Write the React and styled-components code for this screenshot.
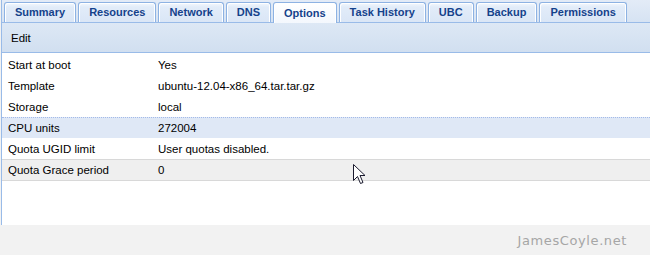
import styled, { createGlobalStyle } from "styled-components";

const tabs = [
  "Summary",
  "Resources",
  "Network",
  "DNS",
  "Options",
  "Task History",
  "UBC",
  "Backup",
  "Permissions",
];

const rows = [
  { name: "Start at boot", value: "Yes" },
  { name: "Template", value: "ubuntu-12.04-x86_64.tar.tar.gz" },
  { name: "Storage", value: "local" },
  { name: "CPU units", value: "272004", state: "selected" },
  { name: "Quota UGID limit", value: "User quotas disabled." },
  { name: "Quota Grace period", value: "0", state: "hover" },
];

const App = () => {
  return (
    <>
      <GlobalStyle />
      <StyledPage>
        <StyledPanel>
          <StyledTabStrip>
            {tabs.map((t) => (
              <StyledTab key={t} $active={t === "Options"}>
                {t}
              </StyledTab>
            ))}
          </StyledTabStrip>
          <StyledToolbar>
            <StyledToolButton>Edit</StyledToolButton>
          </StyledToolbar>
          <StyledGrid>
            {rows.map((r) => (
              <StyledRow key={r.name} $state={r.state}>
                <StyledNameCell>{r.name}</StyledNameCell>
                <StyledValueCell>{r.value}</StyledValueCell>
              </StyledRow>
            ))}
          </StyledGrid>
          <StyledCursor width="13" height="21" viewBox="0 0 13 21">
            <path
              d="M0.5 0.5 L0.5 16.5 L4.5 12.5 L7.5 19.5 L10 18.5 L7 11.5 L12 11.5 Z"
              fill="#fff"
              stroke="#1a1a2e"
              strokeWidth="1"
              strokeLinejoin="miter"
            />
          </StyledCursor>
        </StyledPanel>
        <StyledFooter>
          <StyledWatermark>JamesCoyle.net</StyledWatermark>
        </StyledFooter>
      </StyledPage>
    </>
  );
};

//STYLED COMPONENTS

const GlobalStyle = createGlobalStyle`
  html, body {
    margin: 0;
    padding: 0;
    background: #f2f2f2;
  }
  body {
    font-family: "Liberation Sans", Arial, sans-serif;
    font-size: 11px;
  }
`;

const StyledPage = styled.div`
  display: flex;
  flex-direction: column;

  width: 650px;
  height: 255px;
`;

const StyledPanel = styled.div`
  background: #fff;

  border-left: 1px solid #99bbe8;
  margin-left: 1px;

  position: relative;

  height: 225px;

  overflow: hidden;
`;

const StyledTabStrip = styled.div`
  background: linear-gradient(to bottom, #e3ebf7, #d6e3f3);

  border-bottom: 1px solid #99bbe8;

  display: flex;
  align-items: flex-end;
  gap: 2px;

  padding-left: 2px;

  height: 22px;
`;

const StyledTab = styled.div`
  background: ${({ $active }) =>
    $active
      ? "linear-gradient(to bottom, #ffffff, #f3f7fd)"
      : "linear-gradient(to bottom, #f4f8fd 0, #e2ecf9 4px, #dae6f6)"};

  border: 1px solid #8db2e3;
  border-bottom: none;
  border-radius: 3px 3px 0 0;
  box-shadow: inset 1px 1px 0 #fff, inset -1px 0 0 #fff;

  color: #15428b;

  font-weight: bold;
  font-size: 11px;
  line-height: ${({ $active }) => ($active ? "20px" : "19px")};

  padding: 0 10px;

  height: ${({ $active }) => ($active ? "20px" : "19px")};
  margin-bottom: ${({ $active }) => ($active ? "-1px" : "0")};

  position: relative;
  z-index: ${({ $active }) => ($active ? 1 : 0)};
`;

const StyledToolbar = styled.div`
  background: linear-gradient(to bottom, #dde8f5, #d1dff0);

  border-bottom: 1px solid #99bbe8;

  display: flex;
  align-items: center;

  padding-left: 9px;

  height: 29px;
`;

const StyledToolButton = styled.span`
  color: #000;

  font-size: 11.5px;
`;

const StyledGrid = styled.div`
  display: flex;
  flex-direction: column;

  padding-top: 1px;

  font-size: 11.5px;
`;

const StyledRow = styled.div`
  background: ${({ $state }) =>
    $state === "selected" ? "#dfe8f6" : $state === "hover" ? "#efefef" : "#fff"};

  border-top: 1px
    ${({ $state }) =>
      $state === "selected"
        ? "dotted #a3bae9"
        : $state === "hover"
        ? "solid #d8d8d8"
        : "solid transparent"};
  border-bottom: 1px
    ${({ $state }) =>
      $state === "selected"
        ? "dotted #a3bae9"
        : $state === "hover"
        ? "solid #d8d8d8"
        : "solid #ededed"};

  display: grid;
  grid-template-columns: 149px 1fr;
  align-items: center;

  height: 20px;
  margin-top: -1px;

  &:first-child {
    margin-top: 0;
  }
`;

const StyledNameCell = styled.div`
  color: #000;

  padding-left: 6px;

  white-space: nowrap;
`;

const StyledValueCell = styled.div`
  color: #000;

  padding-left: 7px;

  white-space: nowrap;
`;

const StyledCursor = styled.svg`
  position: absolute;
  left: 351px;
  top: 164px;
`;

const StyledFooter = styled.div`
  background: #f2f2f2;

  display: flex;
  align-items: center;
  justify-content: flex-end;

  flex: 1;

  padding-right: 23px;
`;

const StyledWatermark = styled.span`
  color: #a6a6a6;

  font-family: "DejaVu Sans", sans-serif;
  font-size: 13px;
  letter-spacing: 0.6px;
`;

export default App;
